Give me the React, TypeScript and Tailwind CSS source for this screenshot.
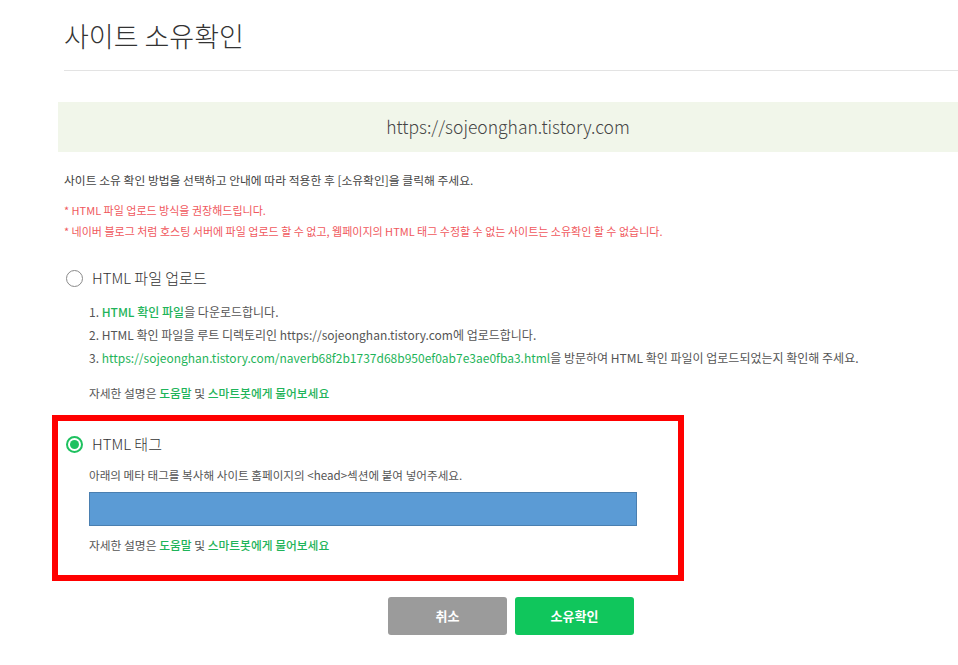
import React from 'react';

const font = { fontFamily: '"Noto Sans CJK KR", "Noto Sans", sans-serif' };

const Radio = ({ checked }: { checked?: boolean }) =>
    checked ? (
        <span className="flex h-[17px] w-[17px] items-center justify-center rounded-full border-2 border-[#1ec15f]">
            <span className="h-[9px] w-[9px] rounded-full bg-[#1ec15f]" />
        </span>
    ) : (
        <span className="h-[17px] w-[17px] rounded-full border border-[#8a8a8a]" />
    );

const HelpLine = () => (
    <p className="text-[11.75px] leading-[20px] text-[#555]">
        자세한 설명은 <span className="font-medium text-[#1fb45a]">도움말</span> 및{' '}
        <span className="font-medium text-[#1fb45a]">스마트봇에게 물어보세요</span>
    </p>
);

export default function App() {
    return (
        <div className="h-[665px] w-[958px] overflow-hidden bg-white pl-[64px]" style={font}>
            <h1 className="pt-[18px] text-[27px] leading-[36px] font-light text-[#333]">사이트 소유확인</h1>
            <div className="mt-[16px] border-t border-[#e3e3e3]" />

            <div className="-ml-[6px] mt-[31px] flex h-[50px] items-center justify-center bg-[#f1f6ea] text-[17.5px] font-light text-[#444]">
                https://sojeonghan.tistory.com
            </div>

            <p className="mt-[18px] text-[11.8px] leading-[20px] text-[#444]">
                사이트 소유 확인 방법을 선택하고 안내에 따라 적용한 후 [소유확인]을 클릭해 주세요.
            </p>
            <p className="mt-[10px] text-[11px] leading-[20px] text-[#f0585d]">* HTML 파일 업로드 방식을 권장해드립니다.</p>
            <p className="text-[11px] leading-[22px] text-[#f0585d]">
                * 네이버 블로그 처럼 호스팅 서버에 파일 업로드 할 수 없고, 웹페이지의 HTML 태그 수정할 수 없는 사이트는 소유확인 할 수 없습니다.
            </p>

            <div className="mt-[24px] ml-[2px] flex h-[24px] items-center gap-[9px]">
                <Radio />
                <span className="text-[15px] font-light text-[#333]">HTML 파일 업로드</span>
            </div>
            <ol className="mt-[10px] pl-[25px] text-[12px] leading-[23px] text-[#555]">
                <li>
                    1. <span className="font-medium text-[#1fb45a]">HTML 확인 파일</span>을 다운로드합니다.
                </li>
                <li>2. HTML 확인 파일을 루트 디렉토리인 https://sojeonghan.tistory.com에 업로드합니다.</li>
                <li>
                    3.{' '}
                    <span className="text-[#1fb45a]">
                        https://sojeonghan.tistory.com/naverb68f2b1737d68b950ef0ab7e3ae0fba3.html
                    </span>
                    을 방문하여 HTML 확인 파일이 업로드되었는지 확인해 주세요.
                </li>
            </ol>
            <div className="mt-[14px] pl-[25px]">
                <HelpLine />
            </div>

            <div className="-ml-[12px] mt-[12px] w-[632px] border-[6px] border-[#ff0000] pb-[20px] pl-[8px] pt-[11px]">
                <div className="flex h-[24px] items-center gap-[9px]">
                    <Radio checked />
                    <span className="text-[15px] font-light text-[#333]">HTML 태그</span>
                </div>
                <div className="pl-[23px]">
                    <p className="mt-[9px] text-[11.6px] leading-[20px] text-[#555]">
                        아래의 메타 태그를 복사해 사이트 홈페이지의 &lt;head&gt;섹션에 붙여 넣어주세요.
                    </p>
                    <div className="mt-[7px] h-[34px] w-[548px] border border-[#4a7fb0] bg-[#5b9bd5]" />
                    <div className="mt-[9px]">
                        <HelpLine />
                    </div>
                </div>
            </div>

            <div className="mt-[16px] flex justify-center gap-[8px]">
                <button className="h-[38px] w-[119px] rounded-[3px] bg-[#9b9b9b] text-[13px] font-bold text-white">취소</button>
                <button className="h-[38px] w-[119px] rounded-[3px] bg-[#10c65c] text-[13px] font-bold text-white">소유확인</button>
            </div>
        </div>
    );
}
